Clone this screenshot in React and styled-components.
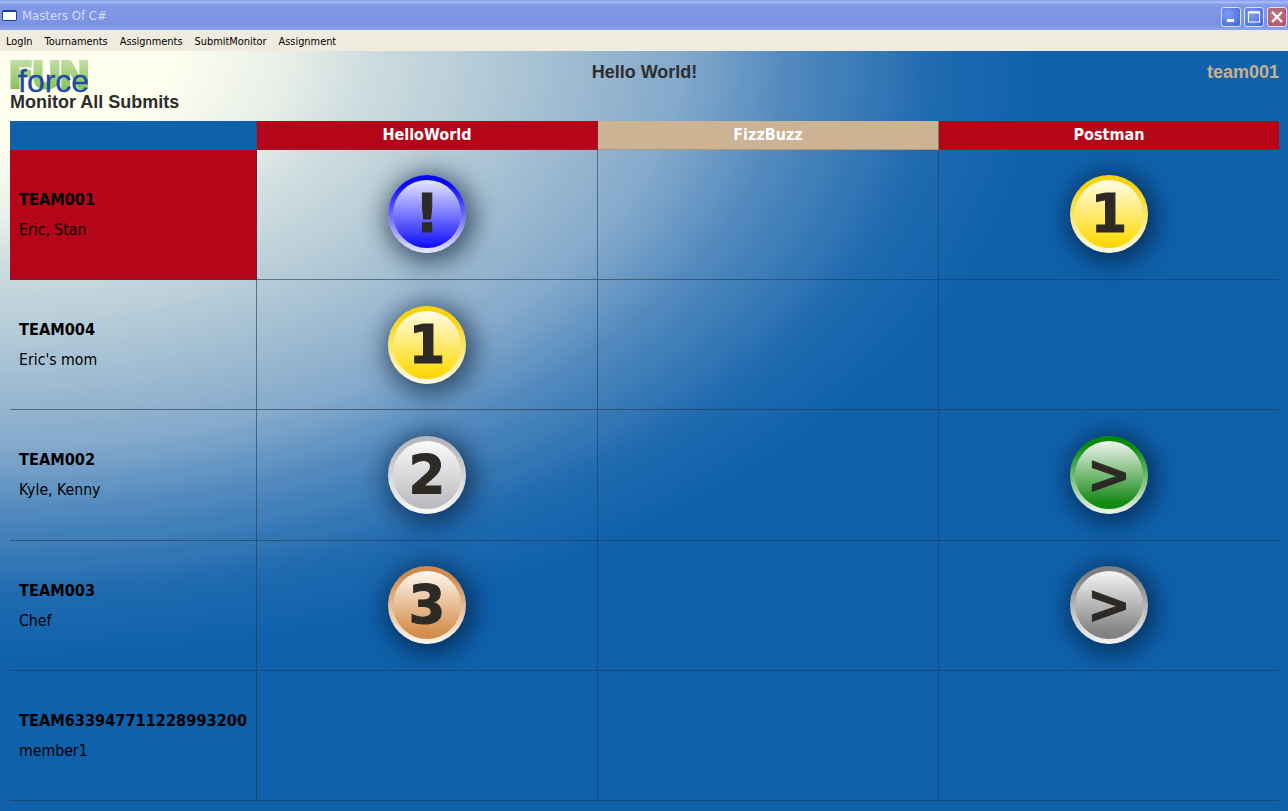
import React from 'react';
import styled, { createGlobalStyle } from 'styled-components';

const GlobalStyle = createGlobalStyle`
  html, body {
    margin: 0;
    padding: 0;
    height: 100%;
    overflow: hidden;
    background: #0f61ac;
  }
`;

const BADGES = {
  blue: { ring: '#0808f5', mid: '#2626fc', light: '#e8e8ff' },
  gold: { ring: '#f8d208', mid: '#ffdc14', light: '#fffce6' },
  silver: { ring: '#b8b8bc', mid: '#c0c0c4', light: '#fafafa' },
  bronze: { ring: '#cf8a4c', mid: '#d4914f', light: '#fff8f0' },
  green: { ring: '#078a07', mid: '#1c8c1c', light: '#f0f6f0' },
  grey: { ring: '#808080', mid: '#858585', light: '#f6f6f6' },
};

// the faint rings in the backdrop, only over the light part of it
const bands = Array.from({ length: 15 }, (_, i) => {
  const at = 24 + i * 4;
  return `rgba(255,255,255,0.02) ${at}%, rgba(255,255,255,0) ${at + 3.9}%`;
}).join(', ');

const Window = styled.div`
  width: 1288px;
  height: 811px;
  display: flex;
  flex-direction: column;
  overflow: hidden;
`;

const TitleBar = styled.div`
  height: 30px;
  flex: none;
  display: flex;
  align-items: center;
  padding: 3px 1px 0 2px;
  box-sizing: border-box;
  background: linear-gradient(#7f9bea 0, #a9bdf3 2px, #8199e6 5px, #7a92e2 24px, #8ba2ea 30px);
`;

const WinIcon = styled.div`
  width: 15px;
  height: 11px;
  margin: -3px 5px 0 0;
  box-sizing: border-box;
  background: #fff;
  border: 1px solid #1c3f8f;
  border-top-width: 2px;
  border-radius: 2px;
`;

const TitleText = styled.span`
  font: 13px "DejaVu Sans", sans-serif;
  font-stretch: condensed;
  color: #d6def8;
  flex: 1;
  margin-top: -3px;
`;

const WinButton = styled.div`
  width: 20px;
  height: 20px;
  margin-left: 3px;
  box-sizing: border-box;
  border: 1px solid #d8e0fa;
  border-radius: 3px;
  background: ${(p) => (p.$close ? 'radial-gradient(circle at 40% 40%, #c27a8a, #a8505f)' : 'radial-gradient(circle at 35% 35%, #7f9cf2, #3f63dc)')};
  display: flex;
  align-items: center;
  justify-content: center;
`;

const MenuBar = styled.div`
  height: 21px;
  flex: none;
  display: flex;
  align-items: center;
  background: #efebde;
  padding: 1px 0 0 6px;
  box-sizing: border-box;
  gap: 12px;
`;

const MenuItem = styled.span`
  font: 10.9px "DejaVu Sans", sans-serif;
  font-stretch: condensed;
  color: #000;
`;

const Content = styled.div`
  flex: 1;
  padding: 0 9px 0 10px;
  background:
    radial-gradient(ellipse 1100px 640px at 0px 0px, ${bands}, rgba(255,255,255,0) 88%),
    radial-gradient(ellipse 1100px 640px at 0px 0px,
      #fffff0 0, #fffff0 15%, #e8efe8 26%, #cfdde0 33%, #b8ced8 42%, #98b7d0 54%, #82a8cb 62%, #4f88bd 72%, #1f6ab0 85%, #0f61ac 95%);
`;

const Header = styled.div`
  height: 70px;
  display: grid;
  grid-template-columns: 1fr 1fr 1fr;
`;

const Logo = styled.div`
  position: relative;
  height: 30px;
  margin-top: 10px;
`;

const LogoFun = styled.span`
  position: absolute;
  left: -2px;
  top: -3px;
  font: 900 38px/34px "DejaVu Sans", sans-serif;
  letter-spacing: -3px;
  background: linear-gradient(#c4e0a8, #82c057);
  -webkit-background-clip: text;
  background-clip: text;
  -webkit-text-fill-color: transparent;
  -webkit-text-stroke: 2px transparent;
`;

const LogoForce = styled.span`
  position: absolute;
  left: 8px;
  top: 4px;
  font: 32px/32px "Liberation Sans", sans-serif;
  color: #1f4a9f;
  -webkit-text-stroke: 0.3px #1f4a9f;
`;

const PageTitle = styled.div`
  font: bold 18px/20px "Liberation Sans", sans-serif;
  color: #2d2d2d;
  margin-top: 1px;
`;

const HelloText = styled.div`
  font: bold 18px/20px "Liberation Sans", sans-serif;
  color: #2d2d2d;
  text-align: center;
  padding-top: 11px;
`;

const UserText = styled.div`
  font: bold 18px/20px "Liberation Sans", sans-serif;
  color: #c8b08f;
  text-align: right;
  padding-top: 11px;
`;

const Board = styled.div`
  display: grid;
  grid-template-columns: 247px 341px 341px 340px;
  grid-template-rows: 28.7px repeat(5, 130.3px);
`;

const HeadCell = styled.div`
  background: ${(p) => p.$bg};
  color: #fff;
  font: bold 16px/28px "DejaVu Sans", sans-serif;
  font-stretch: condensed;
  text-align: center;
  box-sizing: border-box;
  border-right: ${(p) => (p.$last ? 'none' : '1px solid rgba(60, 70, 90, 0.5)')};
  border-bottom: 1px solid rgba(90, 90, 90, 0.3);
`;

const TeamCell = styled.div`
  box-sizing: border-box;
  background: ${(p) => (p.$active ? '#b40618' : 'transparent')};
  border-right: 1px solid rgba(40, 55, 75, 0.6);
  border-bottom: 1px solid rgba(40, 55, 75, 0.6);
  padding: 1px 0 0 9px;
  display: flex;
  flex-direction: column;
  justify-content: center;
  gap: 10px;
  color: #000;
`;

const TeamName = styled.div`
  font: bold 16.2px/20px "DejaVu Sans", sans-serif;
  font-stretch: condensed;
`;

const TeamMembers = styled.div`
  font: 15.7px/20px "DejaVu Sans", sans-serif;
  font-stretch: condensed;
`;

const ScoreCell = styled.div`
  box-sizing: border-box;
  border-right: ${(p) => (p.$last ? 'none' : '1px solid rgba(40, 55, 75, 0.6)')};
  border-bottom: 1px solid rgba(40, 55, 75, 0.6);
  display: flex;
  align-items: center;
  justify-content: center;
`;

const Badge = styled.div`
  width: 78px;
  height: 78px;
  border-radius: 50%;
  box-sizing: border-box;
  padding: 5px;
  background: linear-gradient(${(p) => p.$c.ring} 0, ${(p) => p.$c.ring} 12%, ${(p) => p.$c.light} 100%);
  box-shadow: 3px 4px 24px 6px rgba(0, 20, 45, 0.6);
`;

const BadgeFace = styled.div`
  width: 100%;
  height: 100%;
  border-radius: 50%;
  background: linear-gradient(${(p) => p.$c.light} 0, ${(p) => p.$c.mid} 88%, ${(p) => p.$c.ring} 100%);
  display: flex;
  align-items: center;
  justify-content: center;
  color: #2d2a26;
  font: bold 53px/70px "DejaVu Sans", sans-serif;
  -webkit-text-stroke: 1px #2d2a26;
`;

const teams = [
  { name: 'TEAM001', members: 'Eric, Stan', active: true, scores: [['blue', '!'], null, ['gold', '1']] },
  { name: 'TEAM004', members: "Eric's mom", scores: [['gold', '1'], null, null] },
  { name: 'TEAM002', members: 'Kyle, Kenny', scores: [['silver', '2'], null, ['green', '>']] },
  { name: 'TEAM003', members: 'Chef', scores: [['bronze', '3'], null, ['grey', '>']] },
  { name: 'TEAM633947711228993200', members: 'member1', scores: [null, null, null] },
];

const App = () => (
  <Window>
    <GlobalStyle />
    <TitleBar>
      <WinIcon />
      <TitleText>Masters Of C#</TitleText>
      <WinButton>
        <svg width="12" height="12" viewBox="0 0 12 12"><rect x="2" y="8" width="7" height="3" fill="#fff" /></svg>
      </WinButton>
      <WinButton>
        <svg width="14" height="14" viewBox="0 0 14 14"><rect x="1.5" y="2" width="11" height="10" fill="none" stroke="#fff" /><rect x="1" y="1.5" width="12" height="2" fill="#fff" /></svg>
      </WinButton>
      <WinButton $close>
        <svg width="14" height="14" viewBox="0 0 14 14"><path d="M2 2 L12 12 M12 2 L2 12" stroke="#fff" strokeWidth="2.2" /></svg>
      </WinButton>
    </TitleBar>
    <MenuBar>
      <MenuItem>LogIn</MenuItem>
      <MenuItem>Tournaments</MenuItem>
      <MenuItem>Assignments</MenuItem>
      <MenuItem>SubmitMonitor</MenuItem>
      <MenuItem>Assignment</MenuItem>
    </MenuBar>
    <Content>
      <Header>
        <div>
          <Logo>
            <LogoFun>FUN</LogoFun>
            <LogoForce>force</LogoForce>
          </Logo>
          <PageTitle>Monitor All Submits</PageTitle>
        </div>
        <HelloText>Hello World!</HelloText>
        <UserText>team001</UserText>
      </Header>
      <Board>
        <HeadCell $bg="#0f61ac" />
        <HeadCell $bg="#b40618">HelloWorld</HeadCell>
        <HeadCell $bg="#cbb393">FizzBuzz</HeadCell>
        <HeadCell $bg="#b40618" $last>Postman</HeadCell>
        {teams.map((team) => (
          <React.Fragment key={team.name}>
            <TeamCell $active={team.active}>
              <TeamName>{team.name}</TeamName>
              <TeamMembers>{team.members}</TeamMembers>
            </TeamCell>
            {team.scores.map((score, i) => (
              <ScoreCell key={i} $last={i === 2}>
                {score && (
                  <Badge $c={BADGES[score[0]]}>
                    <BadgeFace $c={BADGES[score[0]]}>{score[1]}</BadgeFace>
                  </Badge>
                )}
              </ScoreCell>
            ))}
          </React.Fragment>
        ))}
      </Board>
    </Content>
  </Window>
);

export default App;
